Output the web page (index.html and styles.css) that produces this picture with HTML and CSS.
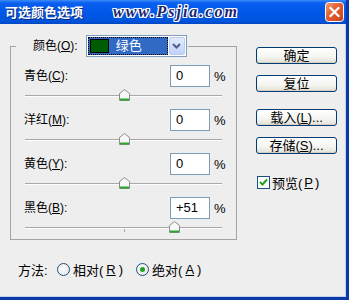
FILE: index.html
```html
<!DOCTYPE html>
<html lang="zh-CN">
<head>
    <meta charset="UTF-8">
    <meta name="viewport" content="width=device-width, initial-scale=1.0">
    <title>可选颜色选项</title>
    <link rel="stylesheet" href="styles.css">
</head>
<body>
    <div class="window">
        <div class="titlebar">
            <span class="title">可选颜色选项</span>
            <span class="watermark">www.Psjia.com</span>
            <span class="close">
                <svg width="19" height="20" viewBox="0 0 19 20">
                    <defs>
                        <linearGradient id="closeBg" x1="0" y1="0" x2="1" y2="1">
                            <stop offset="0" stop-color="#f0a07c"/>
                            <stop offset="0.45" stop-color="#e35d30"/>
                            <stop offset="1" stop-color="#c8401a"/>
                        </linearGradient>
                    </defs>
                    <rect x="0.5" y="0.5" width="18" height="19" rx="3" fill="url(#closeBg)" stroke="#ffffff"/>
                    <path d="M5.5 6 L13.5 14 M13.5 6 L5.5 14" stroke="#ffffff" stroke-width="2.2" stroke-linecap="square"/>
                </svg>
            </span>
        </div>
        <div class="client">
            <div class="main">
                <fieldset class="group">
                    <legend class="group-head">
                        <span class="label">颜色(<u>O</u>):</span>
                        <span class="select">
                            <span class="select-value"><span class="swatch"></span>绿色</span>
                            <span class="select-arrow">
                                <svg width="9" height="6" viewBox="0 0 9 6">
                                    <path d="M1 1 L4.5 4.5 L8 1" fill="none" stroke="#4d6185" stroke-width="2"/>
                                </svg>
                            </span>
                        </span>
                    </legend>

                    <div class="channel">
                        <div class="channel-line">
                            <span class="label">青色(<u>C</u>):</span>
                            <span class="field">0</span>
                            <span class="unit">%</span>
                        </div>
                        <div class="slider">
                            <div class="track">
                                <span class="tick"></span>
                                <svg class="thumb" style="left: 50%" width="11" height="12" viewBox="0 0 11 12">
                                    <path d="M0.5 4.5 L5.5 0.5 L10.5 4.5 L10.5 11.5 L0.5 11.5 Z" fill="#f7f7f7" stroke="#8c8c8c"/>
                                    <path d="M1 10.5 H10" stroke="#2ea52e" stroke-width="2"/>
                                </svg>
                            </div>
                        </div>
                    </div>

                    <div class="channel">
                        <div class="channel-line">
                            <span class="label">洋红(<u>M</u>):</span>
                            <span class="field">0</span>
                            <span class="unit">%</span>
                        </div>
                        <div class="slider">
                            <div class="track">
                                <span class="tick"></span>
                                <svg class="thumb" style="left: 50%" width="11" height="12" viewBox="0 0 11 12">
                                    <path d="M0.5 4.5 L5.5 0.5 L10.5 4.5 L10.5 11.5 L0.5 11.5 Z" fill="#f7f7f7" stroke="#8c8c8c"/>
                                    <path d="M1 10.5 H10" stroke="#2ea52e" stroke-width="2"/>
                                </svg>
                            </div>
                        </div>
                    </div>

                    <div class="channel">
                        <div class="channel-line">
                            <span class="label">黄色(<u>Y</u>):</span>
                            <span class="field">0</span>
                            <span class="unit">%</span>
                        </div>
                        <div class="slider">
                            <div class="track">
                                <span class="tick"></span>
                                <svg class="thumb" style="left: 50%" width="11" height="12" viewBox="0 0 11 12">
                                    <path d="M0.5 4.5 L5.5 0.5 L10.5 4.5 L10.5 11.5 L0.5 11.5 Z" fill="#f7f7f7" stroke="#8c8c8c"/>
                                    <path d="M1 10.5 H10" stroke="#2ea52e" stroke-width="2"/>
                                </svg>
                            </div>
                        </div>
                    </div>

                    <div class="channel">
                        <div class="channel-line">
                            <span class="label">黑色(<u>B</u>):</span>
                            <span class="field">+51</span>
                            <span class="unit">%</span>
                        </div>
                        <div class="slider">
                            <div class="track">
                                <span class="tick"></span>
                                <svg class="thumb" style="left: 75.5%" width="11" height="12" viewBox="0 0 11 12">
                                    <path d="M0.5 4.5 L5.5 0.5 L10.5 4.5 L10.5 11.5 L0.5 11.5 Z" fill="#f7f7f7" stroke="#8c8c8c"/>
                                    <path d="M1 10.5 H10" stroke="#2ea52e" stroke-width="2"/>
                                </svg>
                            </div>
                        </div>
                    </div>
                </fieldset>

                <div class="method">
                    <span class="method-label">方法:</span>
                    <span class="radio"><span class="radio-dot"></span>相对(<u>R</u>)</span>
                    <span class="radio checked"><span class="radio-dot"></span>绝对(<u>A</u>)</span>
                </div>
            </div>

            <div class="side">
                <span class="btn">确定</span>
                <span class="btn">复位</span>
                <span class="btn btn-gap">载入(<u>L</u>)...</span>
                <span class="btn">存储(<u>S</u>)...</span>
                <span class="check">
                    <span class="check-box">
                        <svg width="11" height="11" viewBox="0 0 11 11">
                            <path d="M2 5 L4.5 7.5 L9 2.5" fill="none" stroke="#21a121" stroke-width="2"/>
                        </svg>
                    </span>
                    预览(<u>P</u>)
                </span>
            </div>
        </div>
    </div>
</body>
</html>
```

FILE: styles.css
```css
* {
    margin: 0;
    padding: 0;
    box-sizing: border-box;
}

body {
    font-family: 'Liberation Sans', 'Noto Sans CJK SC', sans-serif;
    font-size: 12px;
    color: #000;
    background: #eeeeee;
}

.window {
    width: 349px;
    height: 300px;
    display: flex;
    flex-direction: column;
    border-right: 3px solid #0a3aa6;
    border-bottom: 3px solid #0a3aa6;
}

/* title bar */
.titlebar {
    height: 24px;
    flex-shrink: 0;
    display: flex;
    align-items: center;
    padding-left: 5px;
    background: linear-gradient(to bottom, #3b8cf7 0, #0a5ef0 3px, #0058e8 50%, #0054dc 88%, #0046c0 100%);
}

.title {
    font-family: 'Noto Sans CJK SC', sans-serif;
    font-size: 13px;
    font-weight: 700;
    line-height: 24px;
    color: #fff;
    text-shadow: 1px 1px 0 #0b2a80;
}

.watermark {
    margin-left: 30px;
    font-family: 'Liberation Serif', serif;
    font-style: italic;
    font-weight: 700;
    font-size: 16px;
    letter-spacing: 2px;
    color: #1b2670;
    text-shadow: 1px 0 0 #fff, -1px 0 0 #fff, 0 1px 0 #fff, 0 -1px 0 #fff,
                 1px 1px 0 #fff, -1px -1px 0 #fff, 1px -1px 0 #fff, -1px 1px 0 #fff;
}

.close {
    margin-left: auto;
    margin-right: 2px;
    display: flex;
}

/* client area */
.client {
    flex: 1;
    display: flex;
    box-shadow: inset -1px -1px 0 #c3d0ee;
}

.main {
    width: 237px;
    padding-left: 10px;
}

u {
    text-decoration: underline;
    text-underline-offset: 1px;
}

.group {
    margin-top: 11px;
    border: 1px solid #a3a3a3;
    padding: 8px 14px 0 13px;
    min-width: 0;
}

.group-head {
    margin-left: -8px;
    padding: 0 1px 0 17px;
    display: flex;
    align-items: center;
    height: 22px;
}

.label {
    line-height: 16px;
    white-space: nowrap;
}

.select {
    margin-left: 8px;
    width: 101px;
    height: 22px;
    display: flex;
    align-items: center;
    gap: 1px;
    padding: 1px;
    background: #fff;
    border: 1px solid #7f9db9;
}

.select-value {
    width: 82px;
    height: 18px;
    display: flex;
    align-items: center;
    background: #316ac5;
    outline: 1px dotted #000;
    outline-offset: -1px;
    color: #fff;
    font-size: 13px;
    line-height: 18px;
}

.swatch {
    width: 19px;
    height: 14px;
    margin: 0 7px 0 2px;
    background: #005c00;
    border: 1px solid #000;
}

.select-arrow {
    width: 16px;
    height: 18px;
    display: flex;
    align-items: center;
    justify-content: center;
    border-radius: 2px;
    border: 1px solid #bccbf0;
    background: linear-gradient(to bottom, #e2eafd, #c0d2fb);
}

.channel-line {
    height: 22px;
    display: flex;
    align-items: center;
}

.channel-line .label {
    flex: 1;
}

.field {
    width: 40px;
    height: 22px;
    padding-left: 5px;
    line-height: 20px;
    font-size: 13px;
    background: #fff;
    border: 1px solid #7f9db9;
}

.unit {
    margin-left: 4px;
    width: 8px;
    font-size: 13px;
}

.slider {
    height: 22px;
    padding-top: 8px;
}

.channel:last-child .slider {
    height: 20px;
}

.track {
    position: relative;
    margin-left: 1px;
    height: 2px;
    border-top: 1px solid #a8a8a8;
    border-bottom: 1px solid #fff;
}

.tick {
    position: absolute;
    left: 50%;
    top: 1px;
    width: 1px;
    height: 3px;
    background: #a8a8a8;
}

.thumb {
    position: absolute;
    top: -7px;
    margin-left: -5px;
}

/* method */
.method {
    margin-top: 21px;
    padding-left: 8px;
    display: flex;
    align-items: center;
    height: 16px;
    font-size: 13px;
}

.method-label {
    width: 39px;
}

.radio {
    display: flex;
    align-items: center;
    gap: 3px;
    margin-right: 13px;
}

.radio-dot {
    width: 13px;
    height: 13px;
    border-radius: 50%;
    border: 1px solid #1c5180;
    background: radial-gradient(circle at 40% 40%, #ffffff, #e4e2dc);
    display: flex;
    align-items: center;
    justify-content: center;
}

.radio.checked .radio-dot::after {
    content: '';
    width: 5px;
    height: 5px;
    border-radius: 50%;
    background: #21a121;
}

/* buttons column */
.side {
    padding: 23px 0 0 19px;
    display: flex;
    flex-direction: column;
    align-items: flex-start;
}

.btn {
    width: 81px;
    height: 17px;
    margin-bottom: 11px;
    display: flex;
    align-items: center;
    justify-content: center;
    font-size: 13px;
    line-height: 15px;
    border: 1px solid #003c74;
    border-radius: 3px;
    background: linear-gradient(to bottom, #ffffff 0%, #f4f4f0 60%, #e2e0d6 100%);
    box-shadow: inset 0 -1px 0 #d6d0c5;
}

.btn-gap {
    margin-top: 6px;
}

.check {
    margin-top: 8px;
    margin-left: 1px;
    display: flex;
    align-items: center;
    gap: 2px;
    font-size: 13px;
}

.check-box {
    width: 13px;
    height: 13px;
    border: 1px solid #1c5180;
    background: #fff;
    display: flex;
}
```
